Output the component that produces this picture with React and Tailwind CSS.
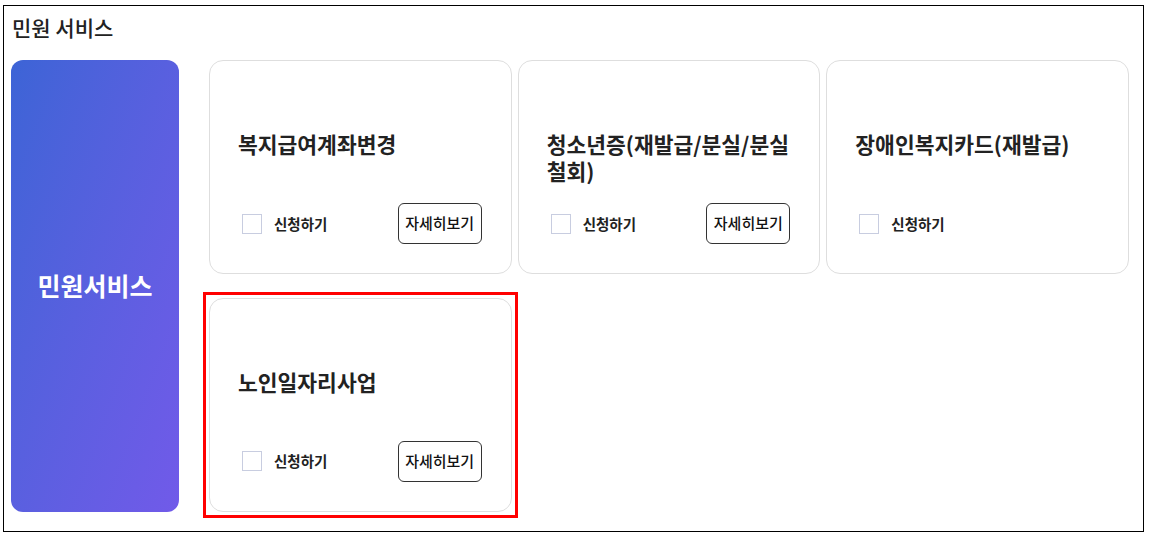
import { useState } from "react";

const services = [
  { id: 1, title: "복지급여계좌변경", detail: true },
  { id: 2, title: "청소년증(재발급/분실/분실 철회)", detail: true },
  { id: 3, title: "장애인복지카드(재발급)", detail: false },
  { id: 4, title: "노인일자리사업", detail: true, highlight: true },
];

function ServiceCard({ service }) {
  const [checked, setChecked] = useState(false);

  return (
    <div
      className={
        service.highlight
          ? "outline-[3px] outline-offset-[3px] outline-[#ff0000]"
          : ""
      }
    >
      <div className="flex h-[214px] flex-col rounded-[14px] border border-[#dedede] bg-white pb-[29px] pl-[28px] pr-[29px] pt-[69px]">
        <h3 className="text-[21.5px] font-bold leading-[27px] text-[#222]">
          {service.title}
        </h3>
        <div className="mt-auto flex h-[41px] items-center justify-between">
          <label className="flex cursor-pointer items-center gap-[12px] pl-[4px]">
            <input
              type="checkbox"
              checked={checked}
              onChange={() => setChecked(!checked)}
              className="h-[20px] w-[20px] appearance-none border border-[#c8cde0] bg-white"
            />
            <span className="text-[14.5px] font-semibold text-[#222]">신청하기</span>
          </label>
          {service.detail && (
            <button className="h-[41px] w-[84px] rounded-[6px] border border-[#333] bg-white text-[15px] font-medium text-[#111]">
              자세히보기
            </button>
          )}
        </div>
      </div>
    </div>
  );
}

export default function App() {
  return (
    <div
      className="min-h-[534px] bg-white pl-[3px] pt-[5px]"
      style={{ fontFamily: '"Noto Sans CJK KR", "Noto Sans", sans-serif' }}
    >
      <div className="flex h-[527px] w-[1141px] flex-col border border-black">
        <h2 className="pl-[8px] pt-[7px] text-[21px] font-medium leading-[28px] text-[#222]">
          민원 서비스
        </h2>
        <div className="mt-[19px] flex gap-[30px] pl-[7px]">
          <div className="flex h-[452px] w-[168px] shrink-0 items-center justify-center rounded-[12px] bg-linear-to-br from-[#3c64d6] to-[#715ae9]">
            <span className="text-[25px] font-bold text-white">민원서비스</span>
          </div>
          <div className="grid w-[920px] grid-cols-3 gap-x-[6px] gap-y-[23px]">
            {services.map((s) => (
              <ServiceCard key={s.id} service={s} />
            ))}
          </div>
        </div>
      </div>
    </div>
  );
}
